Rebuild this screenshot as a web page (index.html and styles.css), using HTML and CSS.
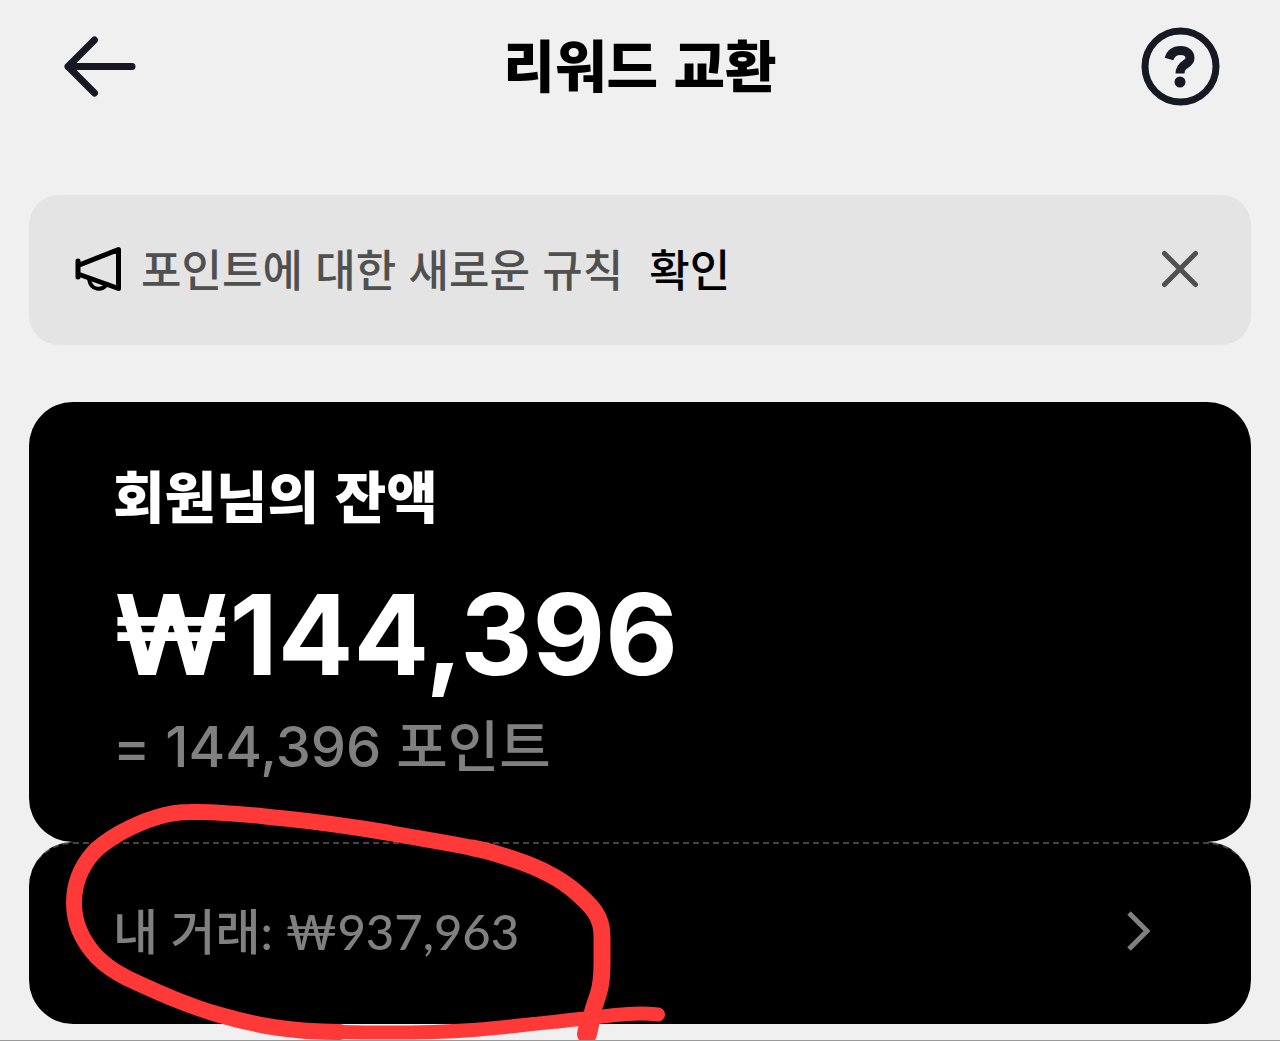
FILE: index.html
```
<!DOCTYPE html>
<html lang="ko">
<head>
    <meta charset="UTF-8">
    <meta name="viewport" content="width=device-width, initial-scale=1.0">
    <title>리워드 교환</title>
    <link rel="stylesheet" href="styles.css">
</head>
<body>
    <header class="header">
        <button class="icon-btn" type="button" aria-label="뒤로">
            <svg width="80" height="80" viewBox="0 0 80 80" fill="none" stroke="#161823" stroke-width="7" stroke-linecap="round" stroke-linejoin="round">
                <path d="M72 40.500H8M34.500 14L8 40.500L34.500 67"/>
            </svg>
        </button>
        <h1>리워드 교환</h1>
        <button class="icon-btn" type="button" aria-label="도움말">
            <svg width="80" height="80" viewBox="0 0 80 80" fill="none" stroke="#161823">
                <circle cx="40.500" cy="40.500" r="35.500" stroke-width="7"/>
                <path d="M29 33C31 26.500 35 24.500 40.500 24.500C46.500 24.500 50 28 50 32C50 39 40 37 40 47.500" stroke-width="9"/>
                <circle cx="40" cy="56" r="5.500" fill="#161823" stroke="none"/>
            </svg>
        </button>
    </header>

    <main>
        <div class="notice">
            <svg class="notice-icon" width="48" height="48" viewBox="0 0 48 48" fill="none" stroke="#000" stroke-width="5" stroke-linecap="round" stroke-linejoin="round">
                <path d="M3 15V31M3 19.500L43.500 3.500V42.500L3 28"/>
                <path d="M14 33C16 45 27 45 32 38" stroke-width="4"/>
            </svg>
            <p>포인트에 대한 새로운 규칙</p>
            <a href="#">확인</a>
            <button class="close-btn" type="button" aria-label="닫기">
                <svg width="40" height="40" viewBox="0 0 40 40" fill="none" stroke="#505050" stroke-width="5" stroke-linecap="round">
                    <path d="M4.500 3.500L35.500 34.500M35.500 3.500L4.500 34.500"/>
                </svg>
            </button>
        </div>

        <div class="wallet">
            <section class="balance">
                <h2>회원님의 잔액</h2>
                <p class="amount">₩144,396</p>
                <p class="points">= 144,396 포인트</p>
            </section>
            <button class="transactions" type="button">
                <span>내 거래: ₩937,963</span>
                <svg width="28" height="44" viewBox="0 0 28 44" fill="none" stroke="#808080" stroke-width="5">
                    <path d="M4 4L22 22L4 40"/>
                </svg>
            </button>

            <!-- red marker circle around the transactions total -->
            <svg class="marker" width="620" height="248" viewBox="60 793 620 248" fill="none" stroke="#ff3838" stroke-linecap="round" stroke-linejoin="round">
                <path stroke-width="16" d="M473 848C440 841 415 838 390 833C355 827 320 822 280 818C250 815 220 811 190 812C165 812 140 822 120 833C108 840 100 845 93 853C80 868 74 884 74 903C74 925 83 942 97 957C105 965 115 972 127 978C155 991 185 1005 220 1015C255 1025 290 1032 340 1032"/>
                <path stroke-width="14" d="M340 1032C385 1033 430 1033 473 1030C500 1028 560 1021 590 1018C615 1015 635 1012 658 1014.500"/>
                <path stroke-width="17" d="M473 848C490 851 500 855 513 859C525 863 536 867 547 873C559 879 568 885 577 893C591 906 602 915 602 936V963C602 993 596 997 592 1014"/>
                <path stroke-width="20" d="M590 1020L587 1034"/>
            </svg>
        </div>
    </main>
</body>
</html>
```

FILE: styles.css
```
* {
    box-sizing: border-box;
}
body {
    margin: 0;
    min-height: 100vh;
    background-color: #f0f0f0;
    border-bottom: 1px solid #999;
    font-family: Inter, "Noto Sans CJK KR", sans-serif;
    color: #000;
    overflow-x: hidden;
}
h1, h2, p {
    margin: 0;
}
button {
    padding: 0;
    border: 0;
    background: none;
    font: inherit;
    cursor: pointer;
}
svg {
    display: block;
}
.header {
    display: flex;
    align-items: center;
    justify-content: space-between;
    height: 132px;
    padding: 0 60px;
}
.header h1 {
    padding-bottom: 6px;
    font-size: 56px;
    line-height: 80px;
    font-weight: 900;
    font-family: "Noto Sans CJK KR", sans-serif;
}
main {
    padding: 63px 29px 16px;
}
.notice {
    display: flex;
    align-items: center;
    height: 150px;
    padding: 0 51px 0 46px;
    border-radius: 30px;
    background-color: #e4e4e4;
    font-family: "Noto Sans CJK KR", sans-serif;
    font-size: 44px;
    line-height: 64px;
    font-weight: 500;
}
.notice p {
    margin-left: 18px;
    padding-bottom: 4px;
    color: #505050;
}
.notice a {
    margin-left: 26px;
    padding-bottom: 4px;
    color: #000;
    text-decoration: none;
}
.close-btn {
    margin-left: auto;
}
.wallet {
    position: relative;
    margin-top: 57px;
}
.balance {
    padding: 52px 84px 54px;
    border-radius: 44px;
    background-color: #000;
    color: #fff;
}
.balance h2 {
    font-family: "Noto Sans CJK KR", sans-serif;
    font-size: 56px;
    line-height: 80px;
    font-weight: 900;
}
.amount {
    margin-top: 28px;
    font-size: 112px;
    line-height: 144px;
    font-weight: 700;
}
.points {
    font-size: 56px;
    line-height: 82px;
    font-weight: 500;
    color: #808080;
}
.transactions {
    display: flex;
    align-items: center;
    justify-content: space-between;
    width: 100%;
    height: 182px;
    padding: 0 98px 6px 84px;
    border-top: 2px dashed #444;
    border-radius: 44px;
    background-color: #000;
    color: #808080;
    font-family: Lato, "Noto Sans CJK KR", sans-serif;
    font-size: 49px;
    line-height: 64px;
    font-weight: 500;
}
.marker {
    position: absolute;
    left: 31px;
    bottom: -17px;
}
```
